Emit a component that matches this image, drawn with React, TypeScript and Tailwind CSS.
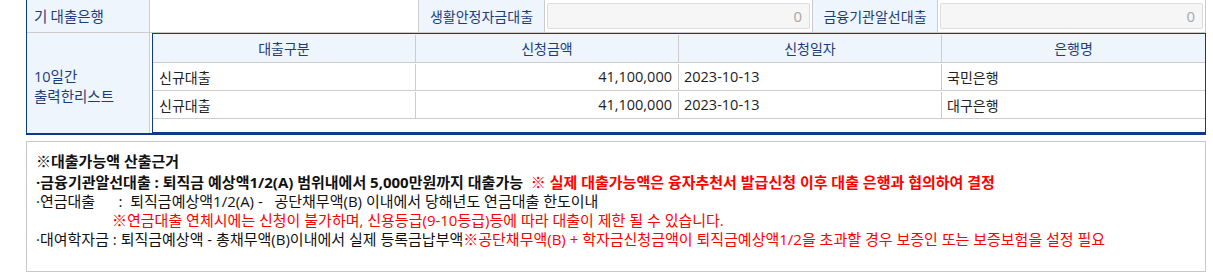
import { FunctionComponent } from 'react';

const NAVY = 'text-[#1c3d7a]';

interface LoanRow {
  type: string;
  amount: string;
  date: string;
  bank: string;
}

const rows: LoanRow[] = [
  { type: '신규대출', amount: '41,100,000', date: '2023-10-13', bank: '국민은행' },
  { type: '신규대출', amount: '41,100,000', date: '2023-10-13', bank: '대구은행' },
];

const ReadonlyInput: FunctionComponent<{ value: string }> = ({ value }) => (
  <div className="flex h-[26px] w-full items-center justify-end rounded-[2px] border border-[#dcdcdc] bg-[#f6f6f6] pr-[7px] font-['Open_Sans',sans-serif] text-[15px] text-[#a8a8a8]">
    {value}
  </div>
);

const App: FunctionComponent = () => {
  return (
    <div className="min-h-[276px] bg-white text-[14px] font-['Noto_Sans_CJK_KR','Noto_Sans',sans-serif]">
      <div className="ml-[26px] w-[1180px] border-b-2 border-l border-[#0d3a8c]">
        {/* 기 대출은행 */}
        <div className="flex h-[33px] border-b border-[#cccccc]">
          <div className={`flex w-[123px] items-center border-r border-[#cccccc] bg-[#eef5fd] pl-[7px] text-[14.5px] ${NAVY}`}>기 대출은행</div>
          <div className="w-[269px] border-r border-[#cccccc]" />
          <div className={`flex w-[126px] items-center justify-center border-r border-[#cccccc] bg-[#eef5fd] ${NAVY}`}>
            생활안정자금대출
          </div>
          <div className="flex w-[268px] items-center border-r border-[#cccccc] px-[2px]">
            <ReadonlyInput value="0" />
          </div>
          <div className={`flex w-[125px] items-center justify-center border-r border-[#cccccc] bg-[#eef5fd] ${NAVY}`}>
            금융기관알선대출
          </div>
          <div className="flex w-[268px] items-center border-r border-[#cccccc] px-[2px]">
            <ReadonlyInput value="0" />
          </div>
        </div>

        {/* 10일간 출력한리스트 */}
        <div className="flex h-[100px]">
          <div className={`flex w-[123px] flex-col justify-center border-r border-[#cccccc] bg-[#eef5fd] pl-[7px] pt-[6px] text-[14.5px] leading-[19px] ${NAVY}`}>
            <span className="font-['Open_Sans','Noto_Sans_CJK_KR',sans-serif]">10일간</span>
            <span>출력한리스트</span>
          </div>
          <div className="flex-1 pl-[2px]">
            <div className="flex h-full flex-col border border-[#0d3a8c]">
              <div className={`grid h-[29px] grid-cols-4 border-b border-[#cccccc] bg-[#eef5fd] pt-[1px] ${NAVY}`}>
                <div className="flex items-center justify-center border-r border-[#cccccc]">대출구분</div>
                <div className="flex items-center justify-center border-r border-[#cccccc]">신청금액</div>
                <div className="flex items-center justify-center border-r border-[#cccccc]">신청일자</div>
                <div className="flex items-center justify-center">은행명</div>
              </div>
              {rows.map((row, i) => (
                <div key={i} className="grid h-[28px] grid-cols-4 border-b border-[#cccccc] pt-[1px] text-[#222222]">
                  <div className="flex items-center border-r border-[#cccccc] pl-[6px]">{row.type}</div>
                  <div className="flex items-center justify-end border-r border-[#cccccc] pr-[6px] font-['Open_Sans',sans-serif] text-[14.5px]">
                    {row.amount}
                  </div>
                  <div className="flex items-center border-r border-[#cccccc] pl-[5px] font-['Open_Sans',sans-serif] text-[14.5px]">
                    {row.date}
                  </div>
                  <div className="flex items-center pl-[5px]">{row.bank}</div>
                </div>
              ))}
            </div>
          </div>
        </div>
      </div>

      {/* 산출근거 */}
      <div className="ml-[26px] mt-[6px] w-[1180px] border border-[#c8c8c8] pb-[22px] pl-[9px] pt-[10px] font-['Open_Sans','Noto_Sans_CJK_KR',sans-serif] text-[15px] leading-[19px] text-[#111111]">
        <p className="font-bold">※대출가능액 산출근거</p>
        <p className="mt-[2px] font-bold">
          ·금융기관알선대출 : 퇴직금 예상액1/2(A) 범위내에서 5,000만원까지 대출가능
          <span className="text-[#ff0000]">&nbsp; ※ 실제 대출가능액은 융자추천서 발급신청 이후 대출 은행과 협의하여 결정</span>
        </p>
        <p className="whitespace-pre">·연금대출      :  퇴직금예상액1/2(A) -   공단채무액(B) 이내에서 당해년도 연금대출 한도이내</p>
        <p className="pl-[76px] text-[#ff0000]">
          ※연금대출 연체시에는 신청이 불가하며, 신용등급(9-10등급)등에 따라 대출이 제한 될 수 있습니다.
        </p>
        <p>
          ·대여학자금 : 퇴직금예상액 - 총채무액(B)이내에서 실제 등록금납부액
          <span className="text-[#ff0000]">
            ※공단채무액(B) + 학자금신청금액이 퇴직금예상액1/2을 초과할 경우 보증인 또는 보증보험을 설정 필요
          </span>
        </p>
      </div>
    </div>
  );
};

export default App;
